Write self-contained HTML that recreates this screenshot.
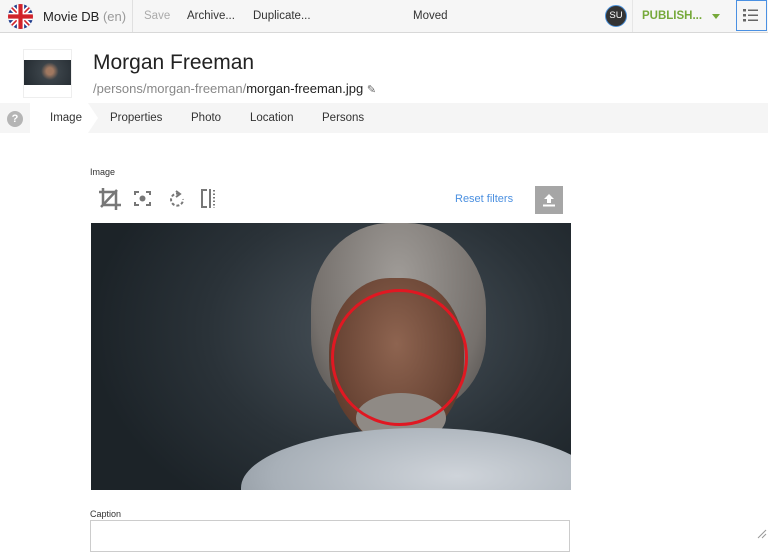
<!DOCTYPE html>
<html><head><style>
body{margin:0;width:768px;height:540px;overflow:hidden;background:#fff;font-family:"Liberation Sans",sans-serif;position:relative}
.a{position:absolute}
.top{left:0;top:0;width:768px;height:32px;background:#f6f6f6;border-bottom:1px solid #d8d8d8}
.t{font-size:11.5px;color:#333;top:10px}
</style></head><body>
<div class="a top"></div>
<svg class="a" style="left:8px;top:4px" width="25" height="25" viewBox="0 0 24 24"><defs><clipPath id="c"><circle cx="12" cy="12" r="12"/></clipPath></defs><g clip-path="url(#c)"><rect width="24" height="24" fill="#1f3c8c"/><path d="M0 0L24 24M24 0L0 24" stroke="#fff" stroke-width="5"/><path d="M0 0L24 24M24 0L0 24" stroke="#d2232a" stroke-width="1.6"/><path d="M12 0V24M0 12H24" stroke="#fff" stroke-width="7"/><path d="M12 0V24M0 12H24" stroke="#d2232a" stroke-width="4"/></g></svg>
<div class="a" style="left:43px;top:9px;font-size:13px;color:#222">Movie DB <span style="color:#999">(en)</span></div>
<div class="a" style="left:132px;top:0;width:1px;height:32px;background:#e0e0e0"></div>
<div class="a t" style="left:144px;color:#aaa">Save</div>
<div class="a t" style="left:187px">Archive...</div>
<div class="a t" style="left:253px">Duplicate...</div>
<div class="a t" style="left:413px">Moved</div>
<div class="a" style="left:605px;top:5px;width:20px;height:20px;border-radius:50%;background:#333;border:1px solid #4a90d9;color:#fff;font-size:9.5px;text-align:center;line-height:20px">SU</div>
<div class="a" style="left:632px;top:0;width:1px;height:32px;background:#e6e6e6"></div>
<div class="a" style="left:642px;top:10px;font-size:11.5px;color:#76a93a;font-weight:bold">PUBLISH...</div>
<div class="a" style="left:712px;top:14px;width:0;height:0;border-left:4px solid transparent;border-right:4px solid transparent;border-top:5px solid #76a93a"></div>
<div class="a" style="left:736px;top:0;width:29px;height:29px;border:1.5px solid #4a90e2;background:#f6f6f6"></div>
<svg class="a" style="left:743px;top:8px" width="16" height="14"><g fill="#666"><rect x="0" y="1" width="3" height="2.5"/><rect x="5" y="1.5" width="10" height="1.5"/><rect x="0" y="6" width="3" height="2.5"/><rect x="5" y="6.5" width="10" height="1.5"/><rect x="0" y="11" width="3" height="2.5"/><rect x="5" y="11.5" width="10" height="1.5"/></g></svg>
<div class="a" style="left:23px;top:49px;width:47px;height:47px;border:1px solid #eee;background:#fff"></div>
<div class="a" style="left:24px;top:60px;width:47px;height:25px;background:radial-gradient(circle at 55% 45%,#a07860 0 12%,#3a4248 30%,#232a30)"></div>
<div class="a" style="left:93px;top:51px;font-size:21px;color:#222">Morgan Freeman</div>
<div class="a" style="left:93px;top:81px;font-size:13px;color:#888">/persons/morgan-freeman/<span style="color:#222">morgan-freeman.jpg</span> <span style="color:#666;font-size:11px">✎</span></div>
<div class="a" style="left:0;top:103px;width:768px;height:30px;background:#f5f5f5"></div>
<svg class="a" style="left:0;top:103px" width="100" height="30"><path d="M30 0H88L98 15L88 30H30Z" fill="#fff"/></svg>
<div class="a" style="left:7px;top:111px;width:16px;height:16px;border-radius:50%;background:#b5b5b5;color:#fff;font-size:11px;font-weight:bold;text-align:center;line-height:16px">?</div>
<div class="a" style="left:50px;top:112px;font-size:11.5px;color:#333">Image</div>
<div class="a" style="left:110px;top:112px;font-size:11.5px;color:#333">Properties</div>
<div class="a" style="left:191px;top:112px;font-size:11.5px;color:#333">Photo</div>
<div class="a" style="left:250px;top:112px;font-size:11.5px;color:#333">Location</div>
<div class="a" style="left:322px;top:112px;font-size:11.5px;color:#333">Persons</div>
<div class="a" style="left:90px;top:167px;font-size:9px;color:#333">Image</div>
<svg class="a" style="left:97px;top:186px" width="130" height="28" fill="none" stroke="#777" stroke-width="2.5"><path d="M6 2V19H24M2 6H19V24M4 21L20 4" /><g stroke-width="2"><path d="M38 9V6H42M49 6H53V9M53 16V19H49M42 19H38V16"/><circle cx="45.5" cy="12.5" r="3" fill="#777" stroke="none"/><path d="M82 8A6 6 0 1 0 86 13" stroke-dasharray="3 2"/><path d="M79 5L83 8L79 11" /><path d="M110 4H105V21H110M113 3V22"/><path d="M117 4V22" stroke-dasharray="1.5 2"/></g></svg>
<div class="a" style="left:455px;top:193px;font-size:11px;color:#4a8fe0">Reset filters</div>
<div class="a" style="left:535px;top:186px;width:28px;height:28px;background:#a6a6a6"></div>
<svg class="a" style="left:541px;top:192px" width="16" height="16" fill="#fff"><path d="M8 2L13 7H10V11H6V7H3Z"/><rect x="2" y="12.5" width="12" height="2"/></svg>
<div class="a" style="left:91px;top:223px;width:480px;height:267px;overflow:hidden;background:radial-gradient(ellipse 60% 80% at 60% 40%,#4a545c,#2a3238 60%,#1c2328)">
<div class="a" style="left:220px;top:0;width:175px;height:190px;border-radius:45% 45% 40% 40%;background:radial-gradient(ellipse at 50% 30%,#a09c98,#75706c 70%,#4a4846)"></div>
<div class="a" style="left:238px;top:55px;width:135px;height:165px;border-radius:45% 45% 50% 50%;background:radial-gradient(ellipse at 50% 40%,#8e6450,#6b4636 60%,#4a2e22)"></div>
<div class="a" style="left:265px;top:170px;width:90px;height:50px;border-radius:50%;background:#8f8a85"></div>
<div class="a" style="left:150px;top:205px;width:360px;height:120px;border-radius:50% 50% 0 0;background:radial-gradient(ellipse at 60% 40%,#cfd4da,#a8b0b8 60%,#7a828a)"></div>
<div class="a" style="left:240px;top:66px;width:131px;height:131px;border:3px solid #e01822;border-radius:50%"></div>
</div>
<div class="a" style="left:90px;top:509px;font-size:9px;color:#333">Caption</div>
<div class="a" style="left:90px;top:520px;width:478px;height:30px;border:1px solid #ccc"></div>
<svg class="a" style="left:757px;top:529px" width="10" height="10" stroke="#999"><path d="M1 9L9 1M5 9L9 5"/></svg>
</body></html>
